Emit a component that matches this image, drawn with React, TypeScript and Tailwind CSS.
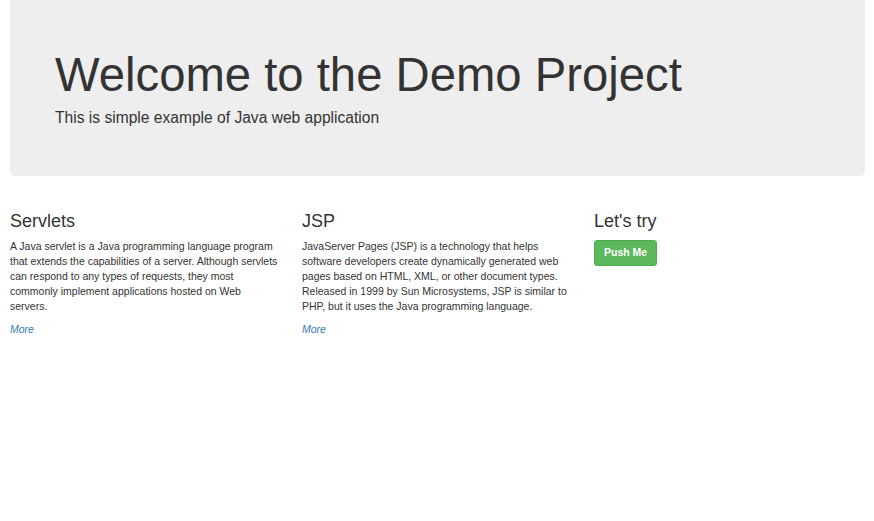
const columns = [
  {
    title: "Servlets",
    text: "A Java servlet is a Java programming language program that extends the capabilities of a server. Although servlets can respond to any types of requests, they most commonly implement applications hosted on Web servers.",
  },
  {
    title: "JSP",
    text: "JavaServer Pages (JSP) is a technology that helps software developers create dynamically generated web pages based on HTML, XML, or other document types. Released in 1999 by Sun Microsystems, JSP is similar to PHP, but it uses the Java programming language.",
  },
];

export default function App() {
  return (
    <div className="min-h-[521px] bg-white text-[#333] font-['Liberation_Sans',Arial,sans-serif]">
      <div className="mx-[10px] h-[176px] w-[855px] rounded-b-[4.5px] bg-[#eeeeee] px-[45px] pt-[36px]">
        <h1 className="mt-[13px] mb-[6px] text-[47.25px] leading-[1.1] font-normal">
          Welcome to the Demo Project
        </h1>
        <p className="text-[15.6px] leading-[22px]">
          This is simple example of Java web application
        </p>
      </div>

      <div className="mt-[21px] grid grid-cols-[292px_292px_292px]">
        {columns.map((col) => (
          <div key={col.title} className="pl-[10px] pr-[12px]">
            <h3 className="mt-[15px] mb-[7.5px] text-[18px] leading-[1.1]">
              {col.title}
            </h3>
            <p className="mb-[7.5px] text-[10.5px] leading-[15px]">{col.text}</p>
            <p className="text-[10.5px] leading-[15px]">
              <a href="#" className="italic text-[#337ab7]">
                More
              </a>
            </p>
          </div>
        ))}
        <div className="pl-[10px] pr-[12px]">
          <h3 className="mt-[15px] mb-[7.5px] text-[18px] leading-[1.1]">
            Let's try
          </h3>
          <button className="rounded-[3px] border border-[#4cae4c] bg-[#5cb85c] px-[9px] py-[4.5px] text-[10.5px] leading-[15px] font-bold text-white">
            Push Me
          </button>
        </div>
      </div>
    </div>
  );
}
